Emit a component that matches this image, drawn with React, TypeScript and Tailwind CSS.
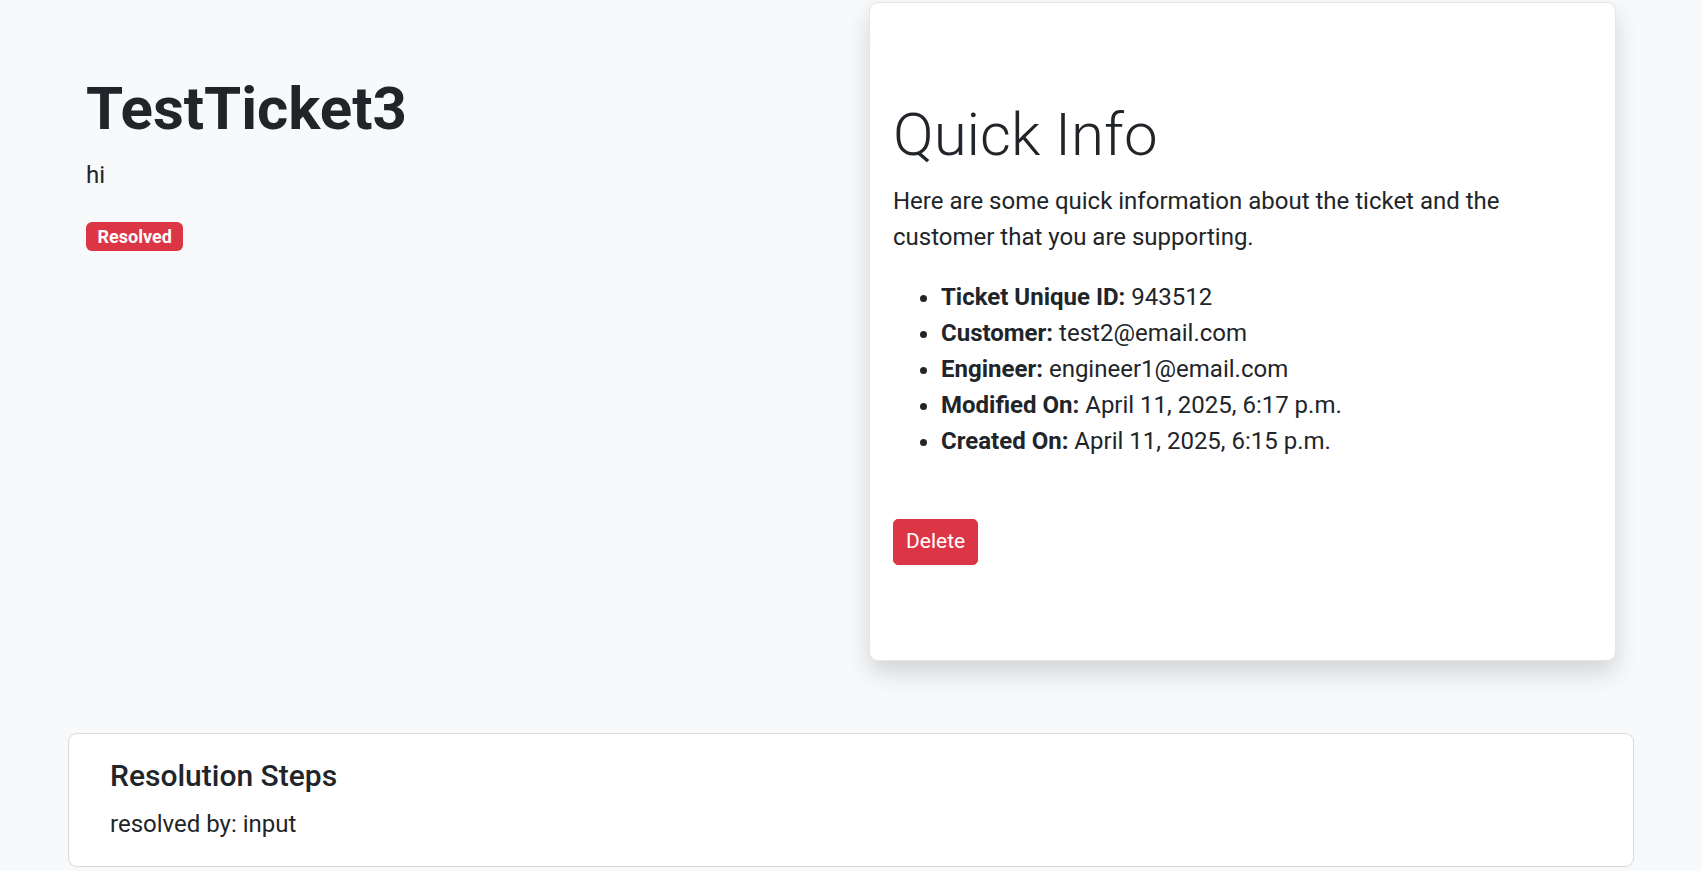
import React from 'react';

const details: { label: string; value: string }[] = [
  { label: 'Ticket Unique ID:', value: '943512' },
  { label: 'Customer:', value: 'test2@email.com' },
  { label: 'Engineer:', value: 'engineer1@email.com' },
  { label: 'Modified On:', value: 'April 11, 2025, 6:17 p.m.' },
  { label: 'Created On:', value: 'April 11, 2025, 6:15 p.m.' },
];

const App: React.FC = () => {
  return (
    <div className="min-h-screen bg-[#f8f9fa] px-[68px] font-['Roboto','Liberation_Sans',sans-serif] text-[24px] leading-[1.5] text-[#212529]">
      <div className="grid grid-cols-2">
        {/* Ticket header */}
        <div className="px-[18px] pt-[73px]">
          <h1 className="mb-[12px] text-[60px] font-bold leading-[1.2]">TestTicket3</h1>
          <p className="mb-[29px]">hi</p>
          <div className="flex">
            <span className="rounded-[6px] bg-[#dc3545] px-[11.5px] py-[5.7px] text-[18px] font-bold leading-none text-white">
              Resolved
            </span>
          </div>
        </div>

        {/* Quick info card */}
        <div className="px-[18px] pt-[2px]">
          <div className="rounded-[9px] border border-black/10 bg-white px-[23px] pt-[96px] pb-[95px] shadow-[0_12px_24px_rgba(0,0,0,0.15)]">
            <h2 className="mb-[12px] text-[60px] font-light leading-[1.2]">Quick Info</h2>
            <p className="mb-[24px]">
              Here are some quick information about the ticket and the customer that you are supporting.
            </p>
            <ul className="mb-[60px] list-disc pl-[48px]">
              {details.map((d) => (
                <li key={d.label}>
                  <strong className="font-bold">{d.label}</strong> {d.value}
                </li>
              ))}
            </ul>
            <button className="rounded-[5px] border border-[#dc3545] bg-[#dc3545] px-[12px] py-[6px] text-[21px] leading-[1.5] text-white">
              Delete
            </button>
          </div>
        </div>
      </div>

      {/* Resolution steps */}
      <div className="mt-[72px] rounded-[9px] border border-black/15 bg-white py-[24px] pl-[41px] pr-[40px]">
        <h5 className="mb-[12px] text-[30px] font-medium leading-[1.2]">Resolution Steps</h5>
        <p>resolved by: input</p>
      </div>
    </div>
  );
};

export default App;
